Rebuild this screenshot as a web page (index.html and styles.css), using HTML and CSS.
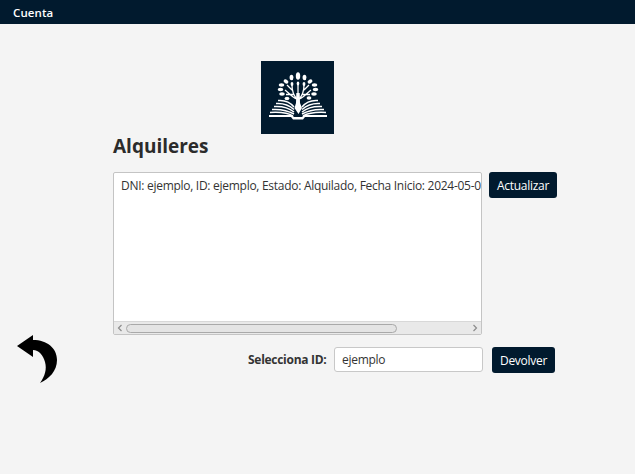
FILE: index.html
```html
<!DOCTYPE html>
<html>
<head>
    <meta charset="UTF-8">
    <meta name="viewport" content="width=device-width, initial-scale=1.0">
    <title>Alquileres</title>
    <link rel="stylesheet" href="styles.css">
</head>
<body>
    <div class="menu-bar"><span class="menu-item">Cuenta</span></div>

    <div class="logo-row">
        <svg class="logo" width="73" height="73" viewBox="0 0 73 73">
            <rect width="73" height="73" fill="#011a2e"/>
            <g fill="#fff">
                <!-- leaves -->
                <ellipse cx="37" cy="15" rx="2.200" ry="3.800"/>
                <ellipse cx="30.500" cy="16.500" rx="1.900" ry="2.800"/>
                <ellipse cx="43.500" cy="16.500" rx="1.900" ry="2.800"/>
                <ellipse cx="25" cy="20.500" rx="2.600" ry="1.900" transform="rotate(35 25 20.500)"/>
                <ellipse cx="49" cy="20.500" rx="2.600" ry="1.900" transform="rotate(-35 49 20.500)"/>
                <ellipse cx="20.500" cy="24" rx="2.800" ry="1.800"/>
                <ellipse cx="53.500" cy="24" rx="2.800" ry="1.800"/>
                <ellipse cx="19.500" cy="28.500" rx="2.800" ry="1.700"/>
                <ellipse cx="54.500" cy="28.500" rx="2.800" ry="1.700"/>
                <ellipse cx="21" cy="33" rx="2.800" ry="1.700"/>
                <ellipse cx="53" cy="33" rx="2.800" ry="1.700"/>
                <ellipse cx="26" cy="37.500" rx="2.400" ry="1.700"/>
                <ellipse cx="48" cy="37" rx="2.400" ry="1.700"/>
                <ellipse cx="31" cy="23" rx="1.400" ry="2"/>
                <ellipse cx="43" cy="23" rx="1.400" ry="2"/>
                <ellipse cx="37" cy="22.500" rx="1.300" ry="2"/>
                <!-- trunk -->
                <path d="M35.300 32 H38.700 L39 42 L41 47 L37.500 53 L33.500 47 L35 42 Z"/>
            </g>
            <g fill="none" stroke="#fff">
                <!-- branches -->
                <path stroke-width="1.300" d="M37 34 V23 M36 38 C32 34 31 30 31 24 M38 38 C42 34 43 30 43 24 M35.500 38 C31 36 27 31 24 29 M38.500 38 C43 36 47 31 50 29 M33 33.500 L25 33.500 M41 33.500 L49 33.500 M31 29 L26 24 M43 29 L48 24"/>
                <!-- pages -->
                <path stroke-width="1.500" d="M17 39.500 C23 39 29 41 33 46 M41 46 C45 41 51 39 57 39.500"/>
                <path stroke-width="1.500" d="M15 42.500 C22 42 28 44 33 48.500 M13 45.500 C20 45 28 47 33 51 M11 48.500 C19 48 27 49.500 33 53 M9 51.500 C18 51 27 51.500 32 55"/>
                <path stroke-width="1.500" d="M41 48.500 C46 44 52 42 59 42.500 M41 51 C46 47 54 45 61 45.500 M41 53 C47 49.500 55 48 63 48.500 M42 55 C48 51.500 56 51 65 51.500"/>
            </g>
            <path fill="#fff" d="M8 54 H31 L33 56 H41 L43 54 H66 V56 H44 L42 58.500 H32 L30 56 H8 Z"/>
        </svg>
    </div>

    <main class="content">
        <h1 class="title">Alquileres</h1>

        <div class="list-row">
            <div class="list-box">
                <div class="list-text">DNI: ejemplo, ID: ejemplo, Estado: Alquilado, Fecha Inicio: 2024-05-01</div>
                <div class="scroll-bar">
                    <svg class="scroll-arrow" width="12" height="12" viewBox="0 0 12 12"><path d="M7.500 3 L4.500 6 L7.500 9" fill="none" stroke="#8c8c8c" stroke-width="1.200"/></svg>
                    <div class="scroll-track"><div class="scroll-thumb"></div></div>
                    <svg class="scroll-arrow" width="12" height="12" viewBox="0 0 12 12"><path d="M4.500 3 L7.500 6 L4.500 9" fill="none" stroke="#8c8c8c" stroke-width="1.200"/></svg>
                </div>
            </div>
            <button class="dark-button update-button">Actualizar</button>
        </div>
    </main>

    <div class="bottom-row">
        <svg class="back-arrow" width="41" height="48" viewBox="0 0 41 48">
            <path d="M0 11 L16 0 V5 C30 5 40 13 40 25 C40 36 32 44 23 48 C28 41 30 34 28 27 C26 20 22 15 16 15 V22 Z"/>
        </svg>
        <div class="id-group">
            <label class="id-label">Selecciona ID:</label>
            <input class="id-input" type="text" value="ejemplo">
            <button class="dark-button return-button">Devolver</button>
        </div>
    </div>
</body>
</html>
```

FILE: styles.css
```css
body {
    margin: 0;
    background: #f4f4f4;
    font-family: "Open Sans", "Noto Sans", sans-serif;
    font-size: 12px;
    color: #333;
}

.menu-bar {
    height: 24px;
    background: #011a2e;
    display: flex;
    align-items: center;
    padding-left: 13px;
}
.menu-item {
    color: #fff;
    font-size: 11.500px;
    font-weight: 600;
    letter-spacing: 0.1px;
}

.logo-row {
    padding: 37px 0 0 261px;
}
.logo { display: block; }

.content {
    padding-left: 113px;
}
.title {
    margin: 0;
    height: 38px;
    line-height: 24px;
    font-size: 19px;
    font-weight: 700;
    color: #2b2b2b;
}

.list-row {
    display: flex;
    align-items: flex-start;
    gap: 7px;
}
.list-box {
    width: 367px;
    height: 161px;
    border: 1px solid #c4c4c4;
    border-radius: 2px;
    background: #fff;
    display: flex;
    flex-direction: column;
    overflow: hidden;
}
.list-text {
    flex: 1;
    padding: 4px 0 0 7px;
    line-height: 17px;
    white-space: nowrap;
    overflow: hidden;
    letter-spacing: -0.28px;
}
.scroll-bar {
    height: 12px;
    background: #e9e9e9;
    border-top: 1px solid #d8d8d8;
    display: flex;
    align-items: center;
}
.scroll-arrow { flex: none; }
.scroll-track {
    flex: 1;
    height: 9px;
}
.scroll-thumb {
    width: 269px;
    height: 7px;
    border: 1px solid #a9a9a9;
    border-radius: 5px;
    background: #e4e4e4;
}

.dark-button {
    height: 26px;
    padding: 0;
    border: none;
    border-radius: 3px;
    background: #011a2e;
    color: #fff;
    font-family: inherit;
    font-size: 12px;
    letter-spacing: -0.28px;
}
.update-button { width: 68px; }
.return-button { width: 63px; }

.bottom-row {
    display: flex;
    align-items: center;
    height: 48px;
    padding-left: 17px;
}
.back-arrow { flex: none; margin-right: 190px; }
.id-group {
    display: flex;
    align-items: flex-start;
    margin-top: 2px;
}
.id-label {
    width: 79px;
    line-height: 25px;
    font-weight: 700;
    white-space: nowrap;
    letter-spacing: -0.28px;
    margin-right: 7px;
}
.id-input {
    width: 133px;
    height: 23px;
    padding: 0 7px;
    border: 1px solid #c8c8c8;
    border-radius: 3px;
    background: #fff;
    color: #333;
    font-family: inherit;
    font-size: 12px;
    letter-spacing: -0.28px;
    margin-right: 9px;
    outline: none;
}
```
